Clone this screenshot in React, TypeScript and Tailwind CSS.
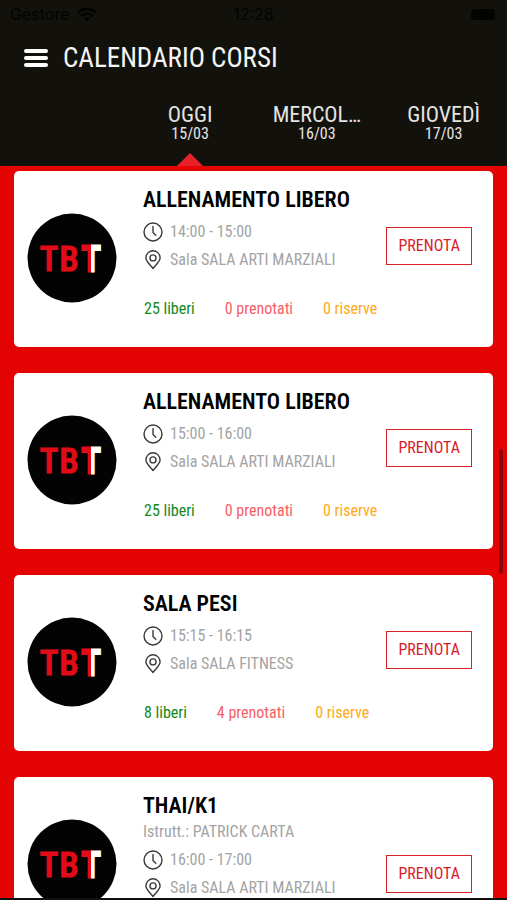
import clsx from 'clsx'

interface Spots {
  free: number
  booked: number
  reserves: number
}

interface Course {
  id: number
  name: string
  trainer?: string
  time: string
  room: string
  spots?: Spots
}

interface Day {
  label: string
  date: string
}

const DAYS: Day[] = [
  { label: 'OGGI', date: '15/03' },
  { label: 'MERCOL…', date: '16/03' },
  { label: 'GIOVEDÌ', date: '17/03' },
]

const COURSES: Course[] = [
  {
    id: 1,
    name: 'ALLENAMENTO LIBERO',
    time: '14:00 - 15:00',
    room: 'SALA ARTI MARZIALI',
    spots: { free: 25, booked: 0, reserves: 0 },
  },
  {
    id: 2,
    name: 'ALLENAMENTO LIBERO',
    time: '15:00 - 16:00',
    room: 'SALA ARTI MARZIALI',
    spots: { free: 25, booked: 0, reserves: 0 },
  },
  {
    id: 3,
    name: 'SALA PESI',
    time: '15:15 - 16:15',
    room: 'SALA FITNESS',
    spots: { free: 8, booked: 4, reserves: 0 },
  },
  {
    id: 4,
    name: 'THAI/K1',
    trainer: 'PATRICK CARTA',
    time: '16:00 - 17:00',
    room: 'SALA ARTI MARZIALI',
  },
]

function WifiIcon() {
  return (
    <svg viewBox="0 0 20 15" className="h-[15px] w-5" fill="none" stroke="currentColor" strokeWidth="2.6">
      <path d="M1 5.5C6 .6 14 .6 19 5.5M4.3 9c3.3-3.2 8.1-3.2 11.4 0" />
      <path d="M10 14.5l-3-3c1.7-1.6 4.3-1.6 6 0z" fill="currentColor" stroke="none" />
    </svg>
  )
}

function ClockIcon() {
  return (
    <svg viewBox="0 0 20 20" className="size-5" fill="none" stroke="#3a3a3a" strokeWidth="1.4">
      <circle cx="10" cy="10" r="9" />
      <path d="M10 4.5v6l2.8 2.8" strokeLinecap="round" />
    </svg>
  )
}

function PinIcon() {
  return (
    <svg viewBox="0 0 20 20" className="size-5" fill="none" stroke="#3a3a3a" strokeWidth="1.4">
      <path
        d="M10 18.500C7.500 15.100 2.900 11.300 2.900 7.900a7.100 7.100 0 0 1 14.200 0C17.100 11.300 12.500 15.100 10 18.500z"
        strokeLinejoin="round"
      />
      <circle cx="10" cy="7.900" r="3" />
    </svg>
  )
}

function ClubLogo() {
  return (
    <svg viewBox="0 0 90 90" className="mt-[42px] size-[90px] shrink-0" role="img" aria-label="TBT">
      <defs>
        <linearGradient id="split" gradientUnits="userSpaceOnUse" x1="64" y1="0" x2="65" y2="0">
          <stop offset="0.5" stopColor="#e30b17" />
          <stop offset="0.5" stopColor="#fff" />
        </linearGradient>
      </defs>
      <circle cx="45" cy="45" r="44.5" fill="#030303" />
      <g fontSize="35" fontWeight="500" textAnchor="middle" fill="#e30b17" stroke="#e30b17">
        <text x="22" y="58">T</text>
        <text x="42" y="58">B</text>
        {/* last letter is half red, half white */}
        <text x="64" y="58" fill="url(#split)" stroke="url(#split)" strokeWidth="3">
          T
        </text>
      </g>
    </svg>
  )
}

function StatusBar() {
  return (
    <div className="grid h-7 grid-cols-3 items-center px-2.5 font-['Inter',sans-serif] text-base text-[#030302]">
      <div className="flex items-center gap-2">
        <span>Gestore</span>
        <WifiIcon />
      </div>
      <span className="text-center">12:28</span>
      <span className="mr-0.5 h-[11px] w-6 justify-self-end rounded-sm bg-[#030302]" />
    </div>
  )
}

function DayTabs() {
  return (
    <nav className="mt-[15px] grid h-[63px] grid-cols-4">
      {DAYS.map((day, i) => (
        <button
          key={day.date}
          className={clsx('flex flex-col items-center text-[#e4e4e2]', i === 0 && 'col-start-2')}
        >
          <span className="text-[22px] leading-6">{day.label}</span>
          <span className="text-base leading-[14px]">{day.date}</span>
          {i === 0 && (
            <svg viewBox="0 0 26 13" className="mt-auto h-[13px] w-[26px]" fill="#e8202a">
              <path d="M13 0l13 13H0z" />
            </svg>
          )}
        </button>
      ))}
    </nav>
  )
}

function CourseCard({ course }: { course: Course }) {
  return (
    <li className="flex min-h-44 items-start rounded-[5px] bg-white pr-[21px] pl-[13px]">
      <ClubLogo />
      <div className="ml-[26px] flex-1 pt-4 text-base text-[#a3a3a3]">
        <h2 className="text-[22px] leading-[26px] font-semibold text-black">{course.name}</h2>
        {course.trainer && <p className="-mb-1 leading-[26px]">Istrutt.: {course.trainer}</p>}
        <div className="mt-[5px] flex items-center justify-between">
          <div className="leading-7">
            <p className="flex items-center gap-[7px]">
              <ClockIcon />
              {course.time}
            </p>
            <p className="flex items-center gap-[7px]">
              <PinIcon />
              Sala {course.room}
            </p>
          </div>
          <button className="h-[38px] border border-[#da2027] px-[11px] text-[#da2027]">PRENOTA</button>
        </div>
        {course.spots && (
          <div className="mt-[22px] flex gap-[30px] pl-px leading-[26px]">
            <span className="text-[#14881c]">{course.spots.free} liberi</span>
            <span className="text-[#f65f64]">{course.spots.booked} prenotati</span>
            <span className="text-[#ffa914]">{course.spots.reserves} riserve</span>
          </div>
        )}
      </div>
    </li>
  )
}

export default function App() {
  return (
    <div className="relative flex h-screen flex-col overflow-hidden border-b-2 border-[#10100c] bg-[#e50404] font-['Roboto_Condensed','Roboto',sans-serif]">
      <header className="bg-[#12110c]">
        <StatusBar />
        <div className="flex h-15 items-center gap-[15px] pl-6">
          <button aria-label="Menu" className="flex w-6 flex-col gap-[3px]">
            <span className="h-1 rounded-full bg-white" />
            <span className="h-1 rounded-full bg-white" />
            <span className="h-1 rounded-full bg-white" />
          </button>
          <h1 className="text-[27px] text-[#f5f5f5]">CALENDARIO CORSI</h1>
        </div>
        <DayTabs />
      </header>
      <main className="min-h-0 flex-1 overflow-y-auto px-3.5 pt-[5px] [scrollbar-width:none]">
        <ul className="flex flex-col gap-[26px]">
          {COURSES.map((course) => (
            <CourseCard key={course.id} course={course} />
          ))}
        </ul>
      </main>
      <div className="absolute top-1/2 right-1 h-[125px] w-1 rounded-full bg-[#8e0508]" />
    </div>
  )
}
